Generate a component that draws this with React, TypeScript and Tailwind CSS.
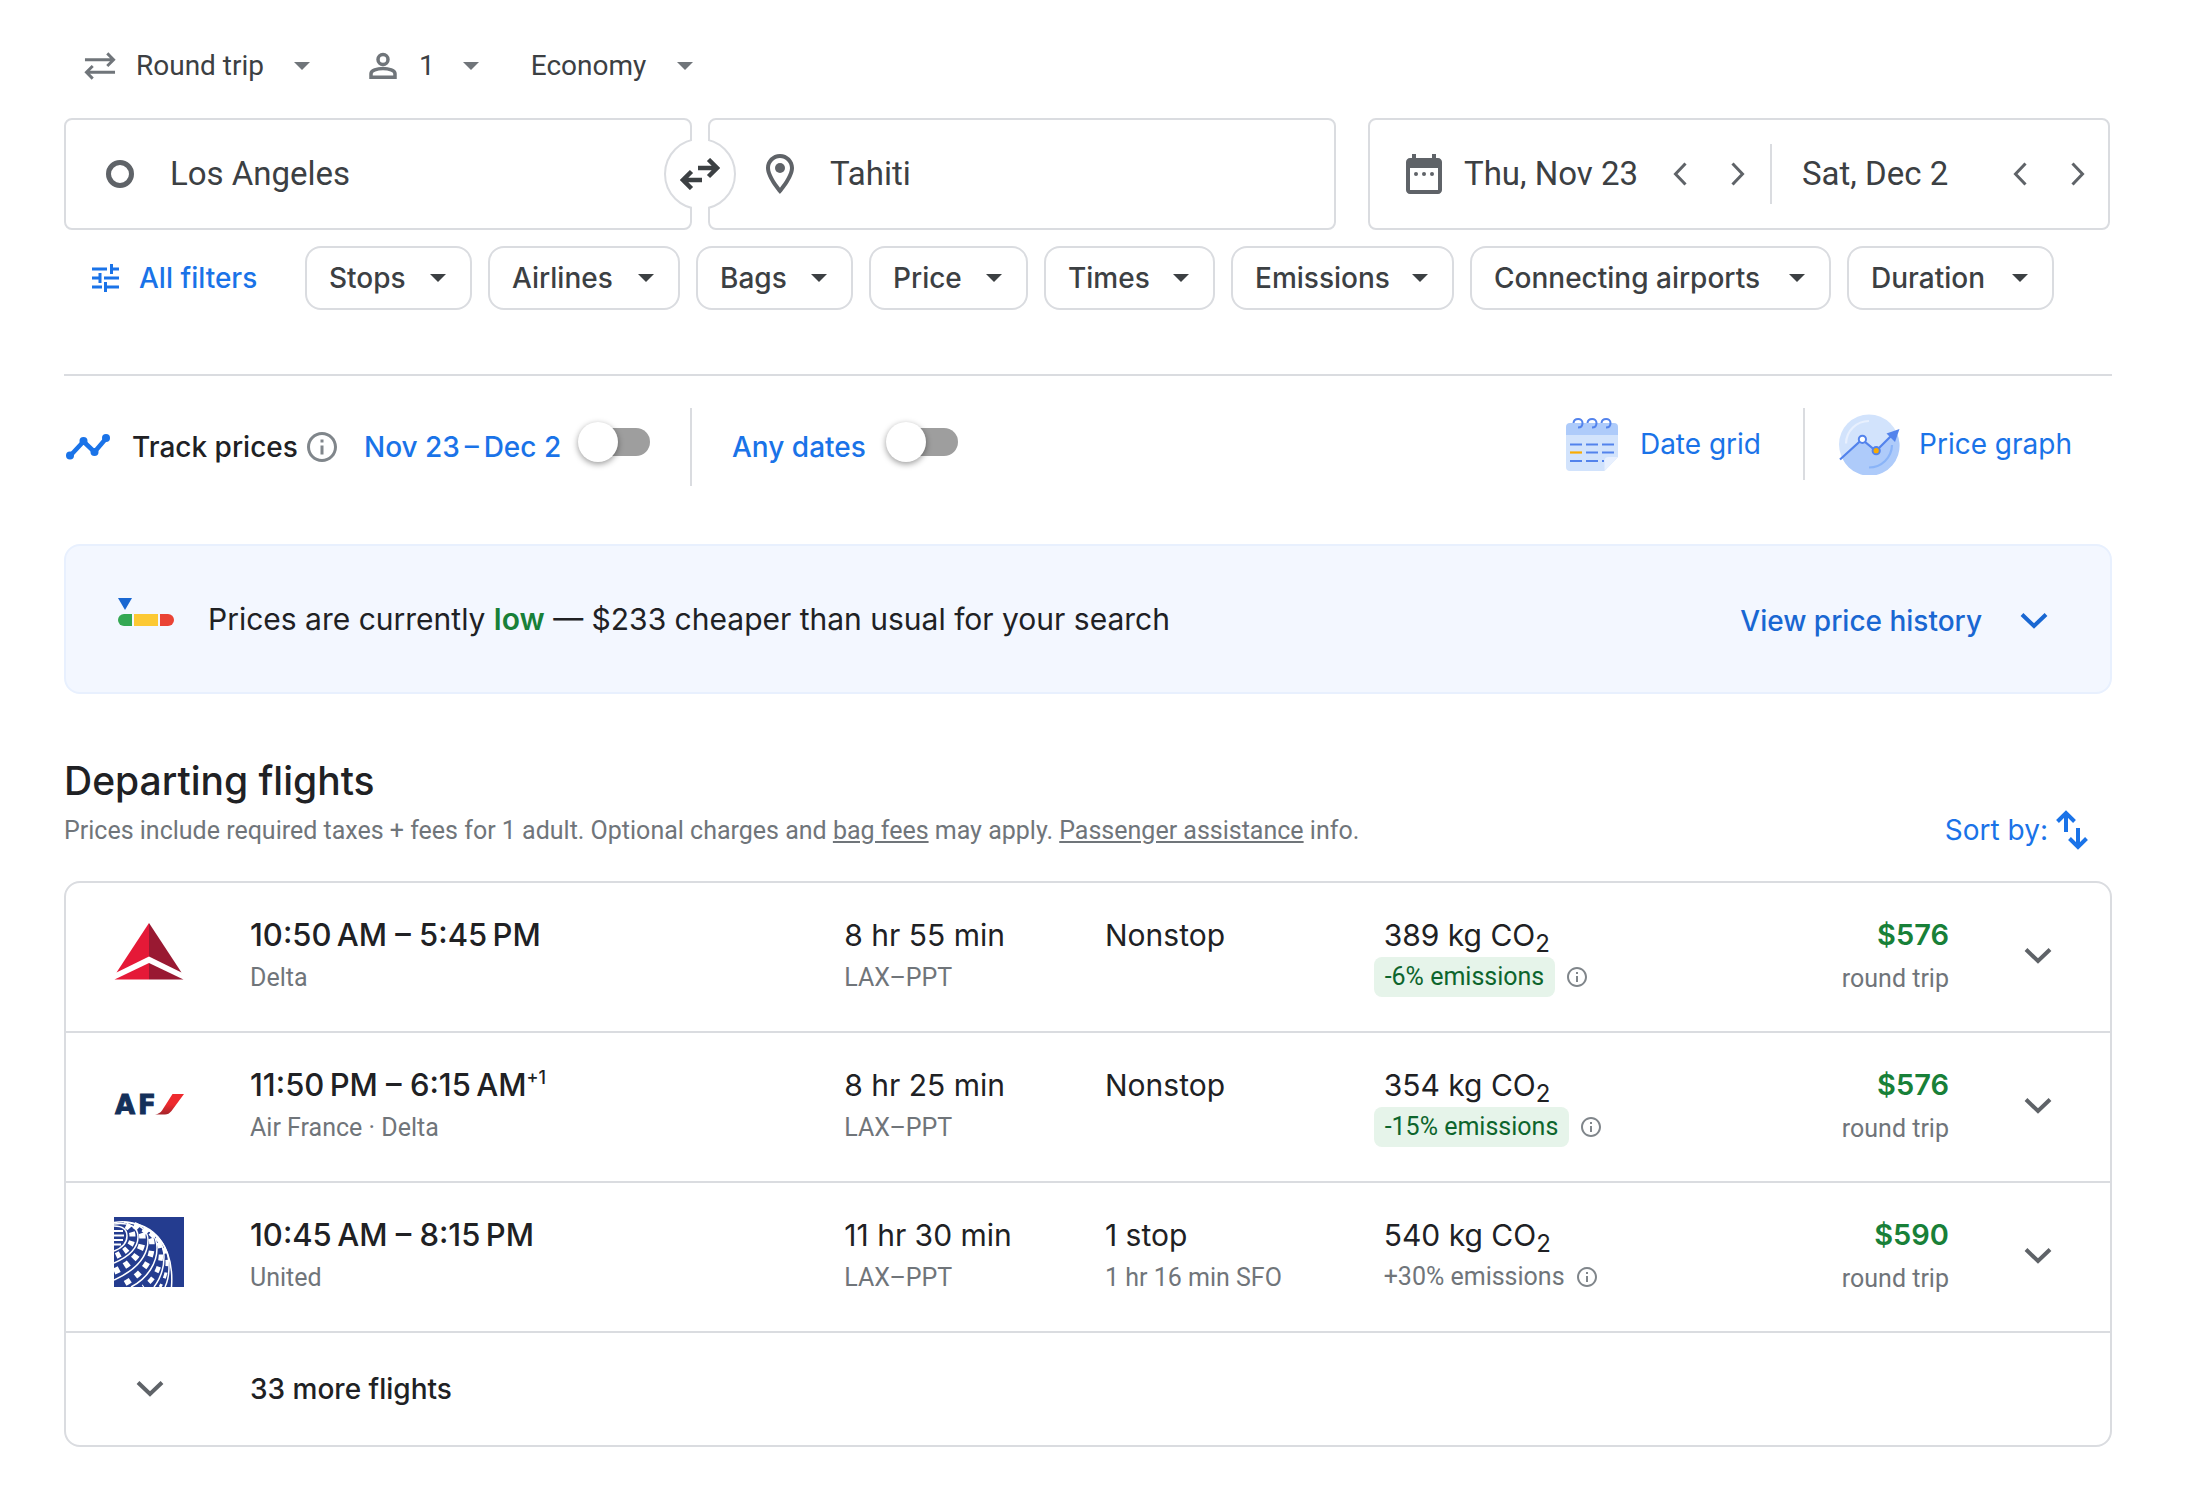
import type { ReactNode } from "react";

const LABEL = "font-['Inter','Roboto',sans-serif]";

function Caret({ className = "" }: { className?: string }) {
  return (
    <svg viewBox="0 0 16 8" className={`h-2 w-4 shrink-0 ${className}`} aria-hidden="true">
      <path d="M0 0h16L8 8z" fill="currentColor" />
    </svg>
  );
}

function Chevron({ className = "" }: { className?: string }) {
  return (
    <svg viewBox="0 0 28 18" className={`h-[18px] w-7 shrink-0 ${className}`} fill="none" aria-hidden="true">
      <path d="M2 2.500 14 14 26 2.500" stroke="currentColor" strokeWidth="4" />
    </svg>
  );
}

function Info({ className }: { className: string }) {
  return (
    <svg viewBox="0 0 24 24" className={`shrink-0 text-[#80868b] ${className}`} fill="currentColor" aria-hidden="true">
      <path d="M11 17h2v-6h-2v6zm1-15C6.480 2 2 6.480 2 12s4.480 10 10 10 10-4.480 10-10S17.520 2 12 2zm0 18c-4.410 0-8-3.590-8-8s3.590-8 8-8 8 3.590 8 8-3.590 8-8 8zM11 9h2V7h-2v2z" />
    </svg>
  );
}

function StepButtons({ label }: { label: string }) {
  return (
    <div className="flex items-center gap-[30px]">
      <button type="button" aria-label={`${label}: one day earlier`} className="flex h-12 w-7 items-center justify-center">
        <svg viewBox="0 0 14 24" className="h-6 w-3.5" fill="none" stroke="#5f6368" strokeWidth="3">
          <path d="M12.500 1.500 2.500 12l10 10.500" />
        </svg>
      </button>
      <button type="button" aria-label={`${label}: one day later`} className="flex h-12 w-7 items-center justify-center">
        <svg viewBox="0 0 14 24" className="h-6 w-3.5" fill="none" stroke="#5f6368" strokeWidth="3">
          <path d="M1.500 1.500 11.500 12l-10 10.500" />
        </svg>
      </button>
    </div>
  );
}

function TripBar() {
  return (
    <div className="flex h-10 items-center pl-5 text-[28px] text-[#3c4043]">
      <svg viewBox="0 0 33 28" className="h-7 w-8" fill="none" stroke="#70757a" strokeWidth="3" aria-hidden="true">
        <path d="M1 7.500h30M24 1l6.500 6.500L24 14M32 20.500H2M9 14l-6.500 6.500L9 27" />
      </svg>
      <div className="relative ml-5 flex items-center">
        <select aria-label="Trip type" className="w-[174px] appearance-none bg-transparent">
          <option>Round trip</option>
          <option>One way</option>
        </select>
        <Caret className="pointer-events-none absolute right-0 text-[#70757a]" />
      </div>
      <button type="button" aria-label="1 passenger" className="ml-[59px] flex items-center">
        <svg viewBox="0 0 28 28" className="h-7 w-7" fill="none" stroke="#70757a" strokeWidth="3.500" aria-hidden="true">
          <circle cx="14" cy="7.500" r="5" />
          <path d="M2 25.200v-3.400c0-3.300 6-5.300 12-5.300s12 2 12 5.300v3.400z" />
        </svg>
        <span className="ml-[22px]">1</span>
        <Caret className="ml-7 text-[#70757a]" />
      </button>
      <div className="relative ml-[52px] flex items-center">
        <select aria-label="Cabin" className="w-[162px] appearance-none bg-transparent">
          <option>Economy</option>
          <option>Business</option>
        </select>
        <Caret className="pointer-events-none absolute right-0 text-[#70757a]" />
      </div>
    </div>
  );
}

function SearchBar() {
  return (
    <div className="mt-8 grid grid-cols-[1272fr_742fr] gap-8 pr-0.5 text-[33px] text-[#3c4043]">
      <div className="relative grid min-w-0 grid-cols-2 gap-4">
        <label className="flex h-28 min-w-0 items-center rounded-lg border-2 border-[#dadce0] pl-10">
          <span className="h-7 w-7 shrink-0 rounded-full border-[5px] border-[#5f6368]" />
          <input aria-label="Where from" defaultValue="Los Angeles" className="ml-9 w-96 min-w-0 bg-transparent outline-none" />
        </label>
        <label className="flex h-28 min-w-0 items-center rounded-lg border-2 border-[#dadce0] pl-[46px]">
          <svg viewBox="0 0 24 24" className="h-12 w-12 shrink-0" fill="#5f6368" aria-hidden="true">
            <path d="M12 2C8.130 2 5 5.130 5 9c0 5.250 7 13 7 13s7-7.750 7-13c0-3.870-3.130-7-7-7zM7 9c0-2.760 2.240-5 5-5s5 2.240 5 5c0 2.880-2.880 7.190-5 9.880C9.920 16.210 7 11.850 7 9z" />
            <circle cx="12" cy="9" r="2.500" />
          </svg>
          <input aria-label="Where to" defaultValue="Tahiti" className="ml-[26px] w-96 min-w-0 bg-transparent outline-none" />
        </label>
        <button
          type="button"
          aria-label="Swap origin and destination"
          className="absolute top-1/2 left-1/2 flex h-[72px] w-[72px] -translate-x-1/2 -translate-y-1/2 items-center justify-center rounded-full border-2 border-[#dadce0] bg-white"
        >
          <span className="absolute -inset-y-1 left-[26px] w-4 bg-white" />
          <svg viewBox="0 0 40 32" className="relative h-8 w-10" fill="none" stroke="#3c4043" strokeWidth="4.500" aria-hidden="true">
            <path d="M18 10h19M28.500 1.500 37 10l-8.500 8.500M22 22H3M11.500 13.500 3 22l8.500 8.500" />
          </svg>
        </button>
      </div>
      <div className="flex h-28 min-w-0 items-center rounded-lg border-2 border-[#dadce0] pr-4 pl-[30px]">
        <svg viewBox="0 0 24 24" className="h-12 w-12 shrink-0" fill="#5f6368" aria-hidden="true">
          <path d="M19 4h-1V2h-2v2H8V2H6v2H5c-1.110 0-1.990.9-1.990 2L3 20c0 1.100.89 2 2 2h14c1.100 0 2-.9 2-2V6c0-1.100-.9-2-2-2zm0 16H5V9h14v11z" />
          <circle cx="8" cy="12" r="1" />
          <circle cx="12" cy="12" r="1" />
          <circle cx="16" cy="12" r="1" />
        </svg>
        <input aria-label="Departure" defaultValue="Thu, Nov 23" className="ml-4 w-[202px] min-w-0 bg-transparent outline-none" />
        <StepButtons label="Departure" />
        <span className="ml-[18px] h-[60px] w-0.5 bg-[#dadce0]" />
        <input aria-label="Return" defaultValue="Sat, Dec 2" className="ml-[30px] w-48 min-w-0 grow bg-transparent outline-none" />
        <StepButtons label="Return" />
      </div>
    </div>
  );
}

const filters = [
  { name: "Stops", width: "w-[167px]" },
  { name: "Airlines", width: "w-[192px]" },
  { name: "Bags", width: "w-[157px]" },
  { name: "Price", width: "w-[159px]" },
  { name: "Times", width: "w-[171px]" },
  { name: "Emissions", width: "w-[223px]" },
  { name: "Connecting airports", width: "w-[361px]" },
  { name: "Duration", width: "w-[207px]" },
];

function Filters() {
  return (
    <div className={`mt-4 flex items-center text-[28px] font-medium text-[#3c4043] ${LABEL}`}>
      <button type="button" className="mr-12 ml-7 flex w-[165px] items-center gap-5 whitespace-nowrap text-[#1a73e8]">
        <svg viewBox="0 0 27 28" className="h-7 w-[27px] shrink-0" fill="none" stroke="currentColor" strokeWidth="3" aria-hidden="true">
          <path d="M0 5h15M19.500 0v10M19.500 5H27M0 14h8M8 9v10M12 14h15M0 23h10M13.500 18v10M13.500 23H27" />
        </svg>
        All filters
      </button>
      <div className="flex gap-4">
        {filters.map((f) => (
          <button
            key={f.name}
            type="button"
            aria-haspopup="menu"
            className={`flex h-16 items-center justify-between rounded-2xl border-2 border-[#dadce0] pr-6 pl-[22px] whitespace-nowrap ${f.width}`}
          >
            {f.name}
            <Caret />
          </button>
        ))}
      </div>
    </div>
  );
}

function Switch({ id }: { id: string }) {
  return (
    <span className="relative flex h-10 w-[72px] items-center">
      <input id={id} type="checkbox" role="switch" className="peer absolute inset-0 z-10 h-full w-full cursor-pointer opacity-0" />
      <span className="ml-1 h-7 w-[68px] rounded-full bg-[#9e9e9e] peer-checked:bg-[#8ab4f8]" />
      <span className="absolute left-0 h-10 w-10 rounded-full bg-white shadow-[0_2px_6px_rgba(0,0,0,0.4)] peer-checked:left-8 peer-checked:bg-[#1a73e8]" />
    </span>
  );
}

function DateGridIcon() {
  return (
    <svg viewBox="0 0 52 54" className="h-[54px] w-[52px]" fill="none" aria-hidden="true">
      <path d="M0 18h52v22L38.500 54H4a4 4 0 0 1-4-4z" fill="#d2e3fc" />
      <path d="M0 18v-8a4 4 0 0 1 4-4h44a4 4 0 0 1 4 4v8z" fill="#aecbfa" />
      <path d="M38.500 54V44a4 4 0 0 1 4-4H52z" fill="#e8f0fe" />
      <path
        d="M7.500 6c.5-5.500 9-5.500 9 0 0 3-2 4.500-4.500 4.500M21.500 6c.5-5.500 9-5.500 9 0 0 3-2 4.500-4.500 4.500M35.500 6c.5-5.500 9-5.500 9 0 0 3-2 4.500-4.500 4.500"
        stroke="#5383ec"
        strokeWidth="2"
      />
      <path d="M4 27.500h12M20 27.500h12M36 27.500h12M20 35.500h12M36 35.500h12M4 44h12M20 44h12M36 44h2" stroke="#5383ec" strokeWidth="2.200" />
      <path d="M4 35.500h12" stroke="#f9ab00" strokeWidth="2.200" />
    </svg>
  );
}

function PriceGraphIcon() {
  return (
    <svg viewBox="0 0 62 61" className="h-[61px] w-[62px]" fill="none" aria-hidden="true">
      <circle cx="30" cy="30.500" r="30" fill="#d2e3fc" />
      <path d="M3 43.500 23 25.500l14 11.500 20-19.500A30 30 0 1 1 3 43.500z" fill="#aecbfa" />
      <path d="M7 29.500A23 23 0 0 1 30 7" stroke="#e8f0fe" strokeWidth="2.200" />
      <path d="M53 31a23 23 0 0 1-23 22.500" stroke="#8ab4f8" strokeWidth="2.200" />
      <path d="M1 45.500 23 25.500l14 11.500L55 19" stroke="#5383ec" strokeWidth="2.200" />
      <path d="M60.500 15 56 28 47.500 19.500z" fill="#5383ec" />
      <circle cx="23.400" cy="25.300" r="3.600" fill="#fff" stroke="#5383ec" strokeWidth="2" />
      <circle cx="37.200" cy="36.700" r="3.600" fill="#f9ab00" stroke="#5383ec" strokeWidth="2" />
    </svg>
  );
}

function Tracking() {
  return (
    <div className={`mt-8 flex h-[78px] items-center pl-0.5 text-[28px] font-medium text-[#1a73e8] ${LABEL}`}>
      <svg viewBox="0 0 44 26" className="h-[26px] w-11 shrink-0" aria-hidden="true">
        <path d="M4 22 17.500 7.500l11 10.500L40 4.500" fill="none" stroke="currentColor" strokeWidth="4.500" strokeLinejoin="round" />
        <g fill="currentColor">
          <circle cx="4" cy="21.500" r="4" />
          <circle cx="17.500" cy="7" r="4" />
          <circle cx="28.500" cy="18" r="4" />
          <circle cx="40" cy="4" r="4" />
        </g>
      </svg>
      <div className="ml-[22px] flex w-[162px] whitespace-nowrap text-[#202124]">Track prices</div>
      <button type="button" aria-label="About price tracking" className="ml-2.5">
        <Info className="h-9 w-9" />
      </button>
      <label htmlFor="track-dates" className="ml-6 w-[194px] whitespace-nowrap">
        {"Nov 23\u2009–\u2009Dec 2"}
      </label>
      <div className="ml-5 pb-2.5">
        <Switch id="track-dates" />
      </div>
      <span className="ml-10 h-full w-0.5 bg-[#dadce0]" />
      <label htmlFor="track-any" className="ml-10 w-[134px] whitespace-nowrap">
        Any dates
      </label>
      <div className="ml-5 pb-2.5">
        <Switch id="track-any" />
      </div>
      <div className="mb-1.5 ml-auto flex items-center pr-10 font-normal">
        <button type="button" className="flex items-center gap-[22px]">
          <DateGridIcon />
          Date grid
        </button>
        <span className="mr-[34px] ml-[42px] h-[72px] w-0.5 bg-[#dadce0]" />
        <button type="button" className="flex items-center gap-[18px]">
          <PriceGraphIcon />
          Price graph
        </button>
      </div>
    </div>
  );
}

function PriceBanner() {
  return (
    <section className={`mt-[58px] flex h-[150px] items-center rounded-2xl border-2 border-[#e8f0fe] bg-[#f3f7ff] pr-[62px] pl-[52px] ${LABEL}`}>
      <svg viewBox="0 0 56 28" className="mb-3.5 h-7 w-14 shrink-0" aria-hidden="true">
        <path d="M0 0h14L7 12z" fill="#1967d2" />
        <path d="M14 16v12H6a6 6 0 0 1 0-12z" fill="#34a853" />
        <path d="M16 16h24v12H16z" fill="#fcc934" />
        <path d="M42 16h8a6 6 0 0 1 0 12h-8z" fill="#ea4335" />
      </svg>
      <p className="ml-[34px] text-[30px] text-[#202124]">
        Prices are currently <span className="font-semibold text-[#188038]">low</span> — $233 cheaper than usual for your search
      </p>
      <button type="button" className="mt-1 ml-auto flex items-center gap-[38px] text-[28px] font-medium text-[#1967d2]">
        View price history
        <Chevron />
      </button>
    </section>
  );
}

function DeltaLogo() {
  return (
    <svg viewBox="0 0 70 70" className="h-[70px] w-[70px]" role="img" aria-label="Delta">
      <path d="M35 6v33.500L2.500 55.500z" fill="#e51937" />
      <path d="M35 6v33.500l32.500 16z" fill="#991932" />
      <path d="M35 46v16.500H.5z" fill="#e51937" />
      <path d="M35 46v16.500h34.500z" fill="#991932" />
    </svg>
  );
}

function AirFranceLogo() {
  return (
    <svg viewBox="0 0 70 70" className="h-[70px] w-[70px]" role="img" aria-label="Air France">
      <defs>
        <linearGradient id="swoosh" x1="0" y1="0" x2="0" y2="1">
          <stop offset="0.500" stopColor="#ee2a2e" />
          <stop offset="1" stopColor="#a3252b" />
        </linearGradient>
      </defs>
      <g className="font-['DejaVu_Sans',sans-serif] text-[26px] font-bold" fill="#14305a" stroke="#14305a">
        <text x="1" y="47">A</text>
        <text x="24" y="47">F</text>
      </g>
      <path d="M58.500 27H70L57.500 44c-2 2.500-4 3.500-6.500 3.500H41c3.500-.5 5.500-2 7-4z" fill="url(#swoosh)" />
    </svg>
  );
}

function UnitedLogo() {
  return (
    <svg viewBox="0 0 70 70" className="h-[70px] w-[70px]" role="img" aria-label="United" fill="none" stroke="#fff">
      <path d="M0 0h70v70H0z" fill="#243c8f" stroke="none" />
      <g strokeWidth="1.500">
        <path d="M0 5.500C15 2.500 34 8 44 20c10 12 15 30 13.500 50" />
        <path d="M0 9c9 0 13 4 13 10 0 7-5 12-13 15" />
        <path d="M0 7c16-2 24 3 24 13 0 12-10 20-24 26" />
        <path d="M10 5c16 1 24 9 24 18 0 16-12 30-34 40" />
        <path d="M22 7c14 4 21 13 21 24 0 15-9 30-26 39" />
        <path d="M31 11c13 7 19 17 19 29 0 12-4 22-10 30" />
        <path d="M38 15c12 9 17 22 17 34 0 8-1 15-4 21" />
      </g>
      <g strokeWidth="2.200">
        <path d="M0 14h9M0 18.500h10M0 23h9M0 27.500h7" />
      </g>
      <g strokeWidth="6" strokeDasharray="4.500 4.500">
        <path d="M12 8.500c4 2 6.500 5.500 6.500 11 0 9.500-7 15.500-18.500 20.500" />
      </g>
      <g strokeWidth="6.500" strokeDasharray="5.500 6">
        <path d="M20 8c6 3 8.500 7.500 8.500 13.500 0 14-11 25.500-28.500 33" />
      </g>
      <g strokeWidth="5.500" strokeDasharray="6 6.500">
        <path d="M29 12c6 4 9 9 9 16 0 18-12.500 31-30 40" />
      </g>
      <g strokeWidth="4.500" strokeDasharray="6 6.500">
        <path d="M36 16c7 6 11 12 11 20.500 0 15-8 27-18 33.500" />
      </g>
      <g strokeWidth="3" strokeDasharray="6 6.500">
        <path d="M42 21c7 7 11 15 11 25 0 10-3 17-7 24" />
      </g>
    </svg>
  );
}

type Flight = {
  logo: ReactNode;
  time: string;
  plus?: string;
  carrier: string;
  duration: string;
  stops: string;
  layover?: string;
  co2: string;
  emissions: string;
  low: boolean;
  price: string;
};

const flights: Flight[] = [
  { logo: <DeltaLogo />, time: "10:50\u2009AM – 5:45\u2009PM", carrier: "Delta", duration: "8 hr 55 min", stops: "Nonstop", co2: "389", emissions: "-6% emissions", low: true, price: "$576" },
  { logo: <AirFranceLogo />, time: "11:50\u2009PM – 6:15\u2009AM", plus: "+1", carrier: "Air France · Delta", duration: "8 hr 25 min", stops: "Nonstop", co2: "354", emissions: "-15% emissions", low: true, price: "$576" },
  { logo: <UnitedLogo />, time: "10:45\u2009AM – 8:15\u2009PM", carrier: "United", duration: "11 hr 30 min", stops: "1 stop", layover: "1 hr 16 min SFO", co2: "540", emissions: "+30% emissions", low: false, price: "$590" },
];

function FlightRow({ f }: { f: Flight }) {
  const main = `text-[30px] leading-[44px] text-[#202124] ${LABEL}`;
  const sub = "text-[25px] leading-[42px] text-[#70757a]";
  return (
    <li className="grid h-[150px] grid-cols-[184px_595fr_261fr_279fr_564fr_163px] items-start border-b-2 border-[#dadce0] pt-[30px] whitespace-nowrap">
      <div className="mt-1 pl-12">{f.logo}</div>
      <div>
        <div className={`text-[31px] leading-[44px] font-medium text-[#202124] ${LABEL}`}>
          {f.time}
          {f.plus && <sup className="-top-3 text-[18px]">{f.plus}</sup>}
        </div>
        <div className={sub}>{f.carrier}</div>
      </div>
      <div>
        <div className={main}>{f.duration}</div>
        <div className={sub}>LAX–PPT</div>
      </div>
      <div>
        <div className={main}>{f.stops}</div>
        {f.layover && <div className={sub}>{f.layover}</div>}
      </div>
      <div>
        <div className={main}>
          {f.co2} kg CO<sub className="text-[24px]">2</sub>
        </div>
        <div className="flex items-center gap-2.5">
          {f.low ? (
            <span className="-ml-2.5 rounded-lg bg-[#e6f4ea] px-[11px] text-[25px] leading-10 text-[#0d652d]">{f.emissions}</span>
          ) : (
            <span className="text-[25px] leading-10 text-[#70757a]">{f.emissions}</span>
          )}
          <button type="button" aria-label="About emissions">
            <Info className="h-6 w-6" />
          </button>
        </div>
      </div>
      <div className="flex h-[88px] justify-between">
        <div className="-ml-[158px] w-40 text-right">
          <div className={`text-[29px] leading-[44px] font-semibold text-[#188038] ${LABEL}`}>{f.price}</div>
          <div className="text-[25px] leading-11 text-[#70757a]">round trip</div>
        </div>
        <button type="button" aria-label="Flight details" className="mt-[19px] mr-[58px] h-12">
          <Chevron className="text-[#5f6368]" />
        </button>
      </div>
    </li>
  );
}

export default function App() {
  return (
    <main className="min-h-screen bg-white pt-[46px] pr-[90px] pb-11 pl-16 font-['Roboto',sans-serif]">
      <TripBar />
      <SearchBar />
      <Filters />
      <hr className="mt-16 border-t-2 border-[#dadce0]" />
      <Tracking />
      <PriceBanner />
      <div className="mt-[62px] flex items-end justify-between">
        <div>
          <h1 className={`text-[39px] leading-[50px] font-medium text-[#202124] ${LABEL}`}>Departing flights</h1>
          <p className="mt-[5px] text-[25px] leading-10 text-[#70757a]">
            Prices include required taxes + fees for 1 adult. Optional charges and{" "}
            <a href="#bag-fees" className="underline">bag fees</a> may apply.{" "}
            <a href="#assistance" className="underline">Passenger assistance</a> info.
          </p>
        </div>
        <button type="button" className={`mr-6 flex items-center gap-2 text-[28px] text-[#1a73e8] ${LABEL}`}>
          Sort by:
          <svg viewBox="0 0 32 40" className="h-10 w-8" fill="none" stroke="currentColor" strokeWidth="4" aria-hidden="true">
            <path d="M10 22V3M1.500 11.500 10 3l8.500 8.500M22 18v19M13.500 28.500 22 37l8.500-8.500" />
          </svg>
        </button>
      </div>
      <ul className="mt-[30px] rounded-2xl border-2 border-[#dadce0]">
        {flights.map((f) => (
          <FlightRow key={f.time} f={f} />
        ))}
        <li>
          <button type="button" className={`flex h-28 w-full items-center text-[28px] font-medium text-[#202124] ${LABEL}`}>
            <Chevron className="ml-[70px] text-[#5f6368]" />
            <span className="ml-[86px]">33 more flights</span>
          </button>
        </li>
      </ul>
    </main>
  );
}
